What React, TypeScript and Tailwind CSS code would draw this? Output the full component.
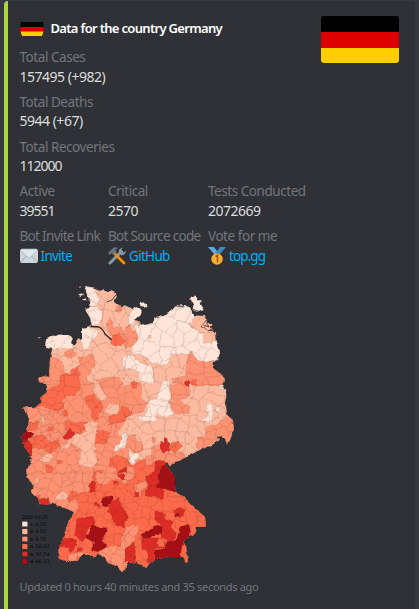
import type { ReactNode } from "react";

type Patch = [tone: number, points: string];
type Point = [number, number];

const TONES = ["#fee5d9", "#fcbba1", "#fc9272", "#fb6a4a", "#de2d26", "#a50f15"];
const LEGEND = ["< 4.55", "≥ 4.55", "≥ 9.75", "≥ 18.41", "≥ 30.54", "≥ 46.13"];

const COUNTRY =
  "84,286 97,288 99,291 103,289 108,291 113,291 117,295 115,302 120,305 120,308 125,305 132,309 137,307 141,309 140,315 134,320 138,322 145,325 152,323 155,318 167,313 172,310 175,306 185,305 190,308 193,315 205,316 207,323 208,330 216,332 217,342 220,352 218,360 213,362 213,368 222,375 225,380 223,387 227,392 225,403 228,416 233,420 234,430 230,440 228,444 225,440 222,436 217,437 219,441 210,446 198,451 187,457 175,462 170,467 167,462 165,465 170,470 175,478 175,487 177,493 187,500 195,508 205,517 206,527 197,527 196,533 190,536 183,543 187,550 188,562 185,563 182,557 168,557 155,560 145,567 138,565 137,562 127,563 125,570 122,571 118,567 108,562 103,557 98,553 95,557 90,555 82,555 78,560 70,562 60,559 58,552 63,538 68,523 74,512 65,508 53,504 48,503 40,505 38,498 31,492 33,485 28,478 26,472 30,463 33,458 30,457 27,450 23,443 25,440 20,437 27,431 28,418 23,407 33,408 42,403 40,398 47,392 45,383 40,382 39,376 49,377 50,358 52,349 46,348 47,338 52,335 70,334 73,338 71,343 75,346 78,338 82,340 82,328 88,327 92,325 90,318 84,308 90,307 90,302 87,295";

const SHEETS: { at: string; patches: Patch[] }[] = [
  {
    at: "translate(10 275) scale(.33333)",
    patches: [
      [0, "218,30 255,38 262,60 270,75 262,90 245,95 240,80 232,60"],
      [0, "220,97 262,95 275,105 278,125 265,152 240,152 235,125"],
      [0, "212,155 235,153 265,168 262,185 245,195 235,220 220,224 212,195"],
      [0, "104,188 125,174 185,172 192,205 195,217 130,222 104,220"],
      [0, "335,250 350,238 370,245 376,275 350,282 335,270"],
      [0, "358,112 376,108 376,150 360,150"],
      [2, "116,248 130,245 155,258 165,290 150,330 115,330"],
      [2, "165,232 185,220 202,240 182,252 168,245"],
      [2, "85,300 120,300 120,330 85,325"],
      [2, "288,145 300,130 312,160 330,152 342,180 320,185 300,180"],
      [2, "322,90 336,95 330,112 320,110"],
      [2, "335,180 376,165 376,212 345,215 335,198"],
      [2, "205,248 250,240 256,265 240,290 228,330 180,330 205,300 210,270"],
      [2, "275,310 320,305 345,330 265,332"],
      [3, "303,190 325,172 345,200 330,212 303,208"],
      [3, "185,285 205,273 212,300 190,330 148,330 155,300 180,295"],
    ],
  },
  {
    at: "translate(125 275) scale(.33333)",
    patches: [
      [0, "10,125 25,98 40,90 55,98 48,118 30,135 25,150 12,145"],
      [0, "28,150 60,146 80,140 92,125 125,110 140,100 150,85 188,87 208,118 205,138 190,145 200,155 235,180 237,205 280,198 292,230 285,258 262,268 235,264 208,250 205,238 140,238 135,260 110,272 85,262 60,245 25,235 20,215 38,185"],
      [0, "0,243 30,240 35,255 60,270 80,268 85,290 82,322 60,320 45,300 30,283 0,280"],
      [1, "66,182 78,180 76,194 68,192"],
      [2, "0,155 15,153 25,170 40,185 30,210 0,220"],
      [2, "190,240 200,232 210,250 240,262 268,256 268,280 295,300 305,330 215,330 180,322 150,310 190,302 180,280"],
      [3, "198,312 215,308 212,330 200,330"],
      [0, "114,318 135,318 130,330 112,330"],
    ],
  },
  {
    at: "translate(10 375) scale(.33333)",
    patches: [
      [3, "150,0 205,0 212,40 195,62 170,65 155,75 160,100 145,110 100,92 70,98 90,85 84,70 112,52 120,40 150,30"],
      [3, "225,65 250,58 265,75 280,95 270,115 262,140 240,125 248,105 228,85"],
      [3, "165,138 225,142 240,140 225,165 195,178 165,165"],
      [3, "295,125 330,110 338,95 355,98 362,115 345,140 320,145 295,150"],
      [3, "258,165 300,170 290,205 255,205"],
      [3, "60,145 85,142 80,165 45,168"],
      [3, "62,185 100,180 120,200 110,220 70,222 60,200"],
      [3, "115,205 145,195 150,215 120,235 105,225"],
      [3, "105,272 130,270 130,295 110,298"],
      [3, "115,155 130,153 130,168 115,167"],
      [3, "300,248 330,240 358,260 350,285 325,290 300,270"],
      [3, "250,290 280,285 280,328 250,328"],
      [3, "158,108 172,108 170,122 158,118"],
      [3, "145,255 155,255 155,266 145,266"],
      [3, "190,297 202,297 202,310 190,310"],
      [1, "230,0 240,0 265,25 285,58 290,75 270,78 250,45 250,25 230,15"],
      [1, "280,110 300,85 328,90 325,115 300,120"],
      [1, "150,220 195,178 230,170 220,150 245,135 262,150 255,200 255,245 265,262 240,278 205,265 215,220 185,205 170,222"],
      [1, "95,245 120,232 130,245 115,262 90,260"],
      [1, "325,0 376,0 376,25 350,20"],
      [1, "92,122 102,120 106,148 96,148"],
      [0, "335,180 345,173 357,182 345,215 315,232 312,215 330,205"],
      [0, "355,230 376,232 376,272 360,255"],
      [4, "158,182 168,176 180,160 195,178 175,193 162,193"],
      [4, "34,200 55,195 66,210 66,245 48,238"],
      [4, "322,290 345,278 355,300 340,318 320,308"],
      [5, "22,185 45,165 70,180 55,193 42,203"],
    ],
  },
  {
    at: "translate(125 375) scale(.33333)",
    patches: [
      [2, "0,32 45,25 50,60 45,65 65,85 55,110 20,120 15,100 0,95"],
      [2, "135,35 165,22 185,25 195,45 185,70 155,75 138,72"],
      [2, "138,78 165,75 195,95 195,115 150,115 135,95"],
      [2, "140,12 165,10 170,22 145,25"],
      [2, "180,-6 300,-6 306,25 290,30 230,25 215,12 190,15"],
      [2, "245,155 275,150 300,128 318,118 335,140 335,180 312,218 290,190 270,200 225,225 215,215 220,185 240,188"],
      [2, "5,185 30,178 35,200 50,200 55,225 35,235 10,215"],
      [2, "78,188 92,188 92,202 80,202"],
      [2, "80,215 110,210 140,235 170,230 185,248 150,266 135,280 125,260 80,255"],
      [0, "40,-6 78,-6 85,20 75,28 45,15"],
      [0, "115,18 133,15 135,65 133,80 140,105 152,118 125,125 95,115 90,140 45,142 40,125 60,120 70,82 95,70 100,50"],
      [0, "245,88 262,88 265,115 258,145 235,140 245,120"],
      [0, "275,95 288,95 285,110 275,108"],
      [0, "285,30 297,30 297,45 288,43"],
      [0, "0,180 10,190 0,205"],
      [3, "20,22 38,22 35,38 22,38"],
      [3, "0,102 20,112 15,125 0,128"],
      [3, "135,205 160,198 170,215 150,235 135,225"],
      [3, "0,258 15,262 25,272 55,262 78,252 95,290 75,330 0,330"],
      [2, "5,278 25,275 28,298 8,305"],
      [2, "60,245 80,240 82,268 65,272"],
      [0, "15,235 35,230 45,245 30,255 25,272 15,265"],
      [4, "108,198 118,205 118,190 130,193 135,228 110,235 105,220"],
      [4, "180,18 192,20 196,32 183,33"],
      [4, "90,255 110,252 128,268 118,285 90,285"],
      [4, "65,305 90,285 110,282 100,310 95,330 60,330"],
      [4, "0,275 8,280 6,310 0,315"],
      [5, "105,280 128,268 155,308 152,335 95,335 90,315 105,300"],
    ],
  },
  {
    at: "translate(10 475) scale(.33333)",
    patches: [
      [2, "45,-6 240,-6 240,25 235,50 200,55 195,75 208,95 195,116 165,104 130,92 85,95 55,50"],
      [2, "258,-6 376,-6 376,0 345,30 320,10 300,18 285,30 262,25"],
      [2, "345,165 376,160 376,230 355,215 350,235 356,250 352,285 335,292 318,275 280,250 268,230 290,215 330,215 335,190"],
      [2, "175,240 205,232 240,235 245,245 205,245 190,262 175,262"],
      [1, "140,65 160,45 178,60 165,75 140,75"],
      [1, "72,10 84,5 86,28 74,25"],
      [3, "172,70 185,45 202,50 192,75 175,80"],
      [3, "80,62 92,60 90,80 80,80"],
      [4, "88,72 115,68 118,85 90,92"],
      [4, "235,30 245,15 257,25 255,50 240,50"],
      [4, "253,85 270,90 268,98 253,94"],
      [4, "200,132 225,125 250,125 256,145 235,155 228,190 215,200 195,180"],
      [4, "300,85 325,70 330,85 350,110 342,160 315,150 305,125 295,110"],
      [4, "152,190 190,190 200,205 185,235 175,215 145,215"],
      [4, "205,215 218,220 215,232 200,230"],
      [4, "320,-4 342,-4 352,12 335,15"],
      [4, "355,208 376,200 376,262 345,258"],
      [4, "312,18 322,18 322,28 312,28"],
      [5, "275,82 285,65 305,62 310,75 290,97 278,92"],
      [5, "240,150 250,148 260,155 290,158 292,170 275,200 292,210 265,230 245,225 252,200 228,190 228,178 240,175"],
    ],
  },
  {
    at: "translate(125 475) scale(.33333)",
    patches: [
      [2, "0,-4 25,-4 25,12 5,18 0,14"],
      [2, "30,30 62,15 70,30 50,50 45,70 30,45"],
      [2, "0,155 40,150 40,175 20,190 20,212 0,220"],
      [4, "60,0 100,0 100,20 118,42 115,75 92,65 60,60 70,30"],
      [4, "25,52 42,52 42,66 28,66"],
      [4, "90,108 122,115 120,130 145,140 140,160 155,175 150,195 130,200 110,190 105,170 110,150 90,135"],
      [4, "148,105 170,95 178,110 165,130 145,125"],
      [4, "0,110 6,115 6,138 0,140"],
      [4, "50,190 100,188 120,205 115,220 90,220 88,262 65,264 70,235 50,220"],
      [4, "0,222 25,205 30,230 25,262 0,262"],
      [3, "98,195 115,195 120,215 100,215"],
      [5, "100,-5 155,-5 160,50 120,45 92,35 105,15"],
      [5, "50,180 75,165 95,150 115,155 110,175 85,180 75,190 55,190"],
      [5, "165,155 190,148 197,165 195,185 175,203 170,220 165,252 130,250 90,260 90,225 115,222 125,200 155,195 160,175"],
      [5, "150,117 160,115 160,124 150,124"],
    ],
  },
];

const noise = (n: number) => {
  const s = Math.sin(n * 127.1 + 11.7) * 43758.5453;
  return s - Math.floor(s);
};

function districtCells(): string[] {
  const seeds: Point[] = [];
  let n = 0;
  for (let y = 280; y < 576; ) {
    const step = y < 400 ? 13 : 10;
    for (let x = 14; x < 240; x += step) {
      n++;
      seeds.push([x + noise(n) * step * 1.1, y + noise(n + 900) * step * 1.1]);
    }
    y += step;
  }
  for (let k = 0; k < 30; k++) seeds.push([32 + noise(k + 70) * 34, 408 + noise(k + 170) * 40]);
  return seeds.map(([sx, sy]) => {
    let cell: Point[] = [
      [sx - 16, sy - 16],
      [sx + 16, sy - 16],
      [sx + 16, sy + 16],
      [sx - 16, sy + 16],
    ];
    for (const [ox, oy] of seeds) {
      const dx = ox - sx;
      const dy = oy - sy;
      if ((dx === 0 && dy === 0) || Math.abs(dx) > 34 || Math.abs(dy) > 34) continue;
      const side = (p: Point) => (p[0] - (sx + ox) / 2) * dx + (p[1] - (sy + oy) / 2) * dy;
      const next: Point[] = [];
      cell.forEach((p, i) => {
        const q = cell[(i + 1) % cell.length];
        const a = side(p);
        const b = side(q);
        if (a <= 0) next.push(p);
        if (a < 0 !== b < 0) {
          const t = a / (a - b);
          next.push([p[0] + (q[0] - p[0]) * t, p[1] + (q[1] - p[1]) * t]);
        }
      });
      cell = next;
    }
    return cell.map((p) => `${p[0].toFixed(1)},${p[1].toFixed(1)}`).join(" ");
  });
}

const CELLS = districtCells();

function GermanyMap() {
  return (
    <svg viewBox="18 276 222 298" className="block h-[298px] w-[222px]">
      <defs>
        <clipPath id="country">
          <polygon points={COUNTRY} />
        </clipPath>
        <filter id="rough" x="0" y="0" width="1" height="1" colorInterpolationFilters="sRGB">
          <feTurbulence type="fractalNoise" baseFrequency=".16" numOctaves="2" seed="4" />
          <feDisplacementMap in="SourceGraphic" scale="4" xChannelSelector="R" yChannelSelector="G" />
        </filter>
      </defs>
      <g filter="url(#rough)">
        <rect x="18" y="276" width="222" height="298" fill="none" />
        <g clipPath="url(#country)">
          <rect x="18" y="276" width="222" height="298" fill={TONES[1]} />
          <polygon points="10,370 50,362 62,372 85,378 112,382 128,388 132,398 122,412 124,425 118,432 130,445 128,470 150,480 10,500" fill={TONES[2]} />
          <polygon points="70,500 92,482 110,474 145,458 176,470 215,520 190,580 50,580" fill={TONES[3]} />
          {SHEETS.map((sheet) => (
            <g key={sheet.at} transform={sheet.at}>
              {sheet.patches.map(([tone, points]) => (
                <polygon key={points} points={points} fill={TONES[tone]} stroke="#713a2c" strokeOpacity=".35" strokeWidth="1.2" />
              ))}
            </g>
          ))}
          {CELLS.map((points) => (
            <polygon key={points} points={points} fill="none" stroke="#713a2c" strokeOpacity=".22" strokeWidth=".4" />
          ))}
          <polygon points="186,381 189,381 190,386 187,386" fill={TONES[4]} />
        </g>
        <polygon points={COUNTRY} fill="none" stroke="#201614" strokeOpacity=".5" strokeWidth=".4" />
        <g fill={TONES[0]} stroke="#151414" strokeWidth=".4">
          <path d="M190 300l5-5 2 5 5 0-1 4 3 5-7 3-5-2 1-5z" />
          <path d="M140 303l5-1 2 4-5 1z" />
          <path d="M78 294l5 -1 2 2-5 1zM82 300l4-1 1 2-4 1z" />
        </g>
        <path d="M202 326l3-6 3 3 5 1-2 4 4 3-6-1-3-3z" fill={TONES[1]} stroke="#151414" strokeWidth=".5" />
      </g>
      <g fill="none" stroke="#232428" strokeLinecap="round">
        <path d="M91 326.500L99 327Q103 329 105 334L111 339.500" strokeWidth="1.300" />
        <path d="M107 302l5-2 4-5M116 303l5 2" strokeWidth=".8" />
        <path d="M79 280l-1 4 2 2M78 289l4 1 1 5 2 3M82 300l5 3M85 307l4-3M172 310l3-4 9 1M190 299l3 5-1 5 6 2M204 325l5 2-3-5M73 339l3 3-3 3" strokeWidth=".7" />
        <path d="M38 338.500l7-1.500m3-1l6-1m3-1l4-.5m3-.5l5-1" strokeWidth=".7" />
      </g>
      <path d="M38 338l2.500-.5M194 297l2-1M79 287l2 0" stroke={TONES[1]} strokeWidth=".9" />
      <g className="font-['DejaVu_Sans']" fontSize="5" fill="#08080a">
        <text x="22" y="518.500" textLength="26">2020-04-25</text>
        {LEGEND.map((label, i) => (
          <g key={label}>
            <rect x="22" y={521.3 + i * 7.48} width="5.800" height="5.500" fill={TONES[i]} stroke="#171719" strokeWidth=".4" />
            <text x="29.500" y={526 + i * 7.48}>{label}</text>
          </g>
        ))}
      </g>
    </svg>
  );
}

function Field({ label, className = "tracking-[-0.45px]", valueClass = "tracking-[-0.5px]", children }: { label: string; className?: string; valueClass?: string; children: ReactNode }) {
  return (
    <div className="h-[44.800px] whitespace-nowrap leading-5">
      <div className={`h-[19.500px] text-[13.500px] text-[#72767d] ${className}`}>{label}</div>
      <div className={`flex h-5 items-center text-[#dcddde] ${valueClass}`}>{children}</div>
    </div>
  );
}

function Envelope() {
  return (
    <svg viewBox="0 0 36 36" className="mr-[3px] h-[18px] w-[18px]">
      <rect y="4" width="36" height="28" rx="4" fill="#ccd6dd" />
      <path d="M1 30l13-13M35 30L22 17" stroke="#99aab5" strokeWidth="2" />
      <path d="M1 7l15 14q2 1.500 4 0L35 7q-1-3-3-3H4Q2 4 1 7z" fill="#e1e8ed" stroke="#99aab5" strokeWidth="1.500" />
    </svg>
  );
}

function Tools() {
  return (
    <svg viewBox="0 0 36 36" className="mr-[3px] h-[18px] w-[18px]">
      <path d="M4 32L27 9" stroke="#8899a6" strokeWidth="6" strokeLinecap="round" />
      <path d="M22 13Q19 4 29 1L26 7l4 4 6-3q-2 10-11 8z" fill="#8899a6" />
      <path d="M13 13l19 19" stroke="#f4900c" strokeWidth="5.500" strokeLinecap="round" />
      <path d="M0 12L9 3Q14-1 20 2l-5 3 2 5-6 6-4-4-4 4z" fill="#66757f" />
    </svg>
  );
}

function Medal() {
  return (
    <svg viewBox="0 0 36 36" className="mr-[3px] h-[18px] w-[18px]">
      <path d="M0 0h12l8 11-7 4z" fill="#55acee" />
      <path d="M24 0h12L24 14l-8-3z" fill="#3b88c3" />
      <circle cx="18" cy="24" r="11.500" fill="#ffac33" />
      <path d="M15 19l4-2v14" fill="none" stroke="#9e5200" strokeWidth="3" />
    </svg>
  );
}

export default function App() {
  return (
    <main className="h-[609px] w-[419px] overflow-hidden bg-[#36393f] pt-px pr-1 pl-1 font-['Noto_Sans',sans-serif] text-[14px]">
      <article className="h-[620px] rounded border-l-4 border-[#a7d63d] bg-[#2f3136] pl-[11.500px]">
        <div className="flex h-[46px] items-start justify-between pr-4">
          <header className="mt-[18px] flex h-5 items-center whitespace-nowrap text-white">
            <svg viewBox="0 0 24 14" className="mr-[7px] h-[14px] w-6">
              <clipPath id="wavy">
                <path d="M1 0H23Q25 7 22 14H2Q-1 7 1 0z" />
              </clipPath>
              <g clipPath="url(#wavy)">
                <path d="M0 0h24v5H0z" fill="#050505" />
                <path d="M0 5h24v4.500H0z" fill="#de0000" />
                <path d="M0 9.500h24V14H0z" fill="#ffce00" />
              </g>
            </svg>
            <h1 className="text-[13px] font-semibold tracking-[-0.68px]">Data for the country Germany</h1>
          </header>
          <div className="mt-[15px] h-[47px] w-[78px] shrink-0 overflow-hidden rounded-[3px]">
            <div className="h-4 bg-black" />
            <div className="h-[15.500px] bg-[#de0000]" />
            <div className="h-4 bg-[#ffce00]" />
          </div>
        </div>
        <Field label="Total Cases">157495 (+982)</Field>
        <Field label="Total Deaths">5944 (+67)</Field>
        <Field label="Total Recoveries" valueClass="tracking-[-1px]">112000</Field>
        <div className="grid grid-cols-[88.500px_100px_180px]">
          <Field label="Active" valueClass="tracking-[-1px]">39551</Field>
          <Field label="Critical">2570</Field>
          <Field label="Tests Conducted">2072669</Field>
          <Field label="Bot Invite Link" className="tracking-[-0.68px]">
            <Envelope />
            <a className="text-[13.500px] tracking-[-0.7px] text-[#00aff4]">Invite</a>
          </Field>
          <Field label="Bot Source code" className="tracking-[-0.68px]">
            <Tools />
            <a className="text-[13.500px] tracking-[-0.7px] text-[#00aff4]">GitHub</a>
          </Field>
          <Field label="Vote for me">
            <Medal />
            <a className="text-[13.500px] tracking-[-0.9px] text-[#00aff4]">top.gg</a>
          </Field>
        </div>
        <div className="-ml-[1.500px] pt-[5px]">
          <GermanyMap />
        </div>
        <footer className="pt-[5px] text-[11px] leading-4 tracking-[-0.31px] text-[#72767d]">Updated 0 hours 40 minutes and 35 seconds ago</footer>
      </article>
    </main>
  );
}
